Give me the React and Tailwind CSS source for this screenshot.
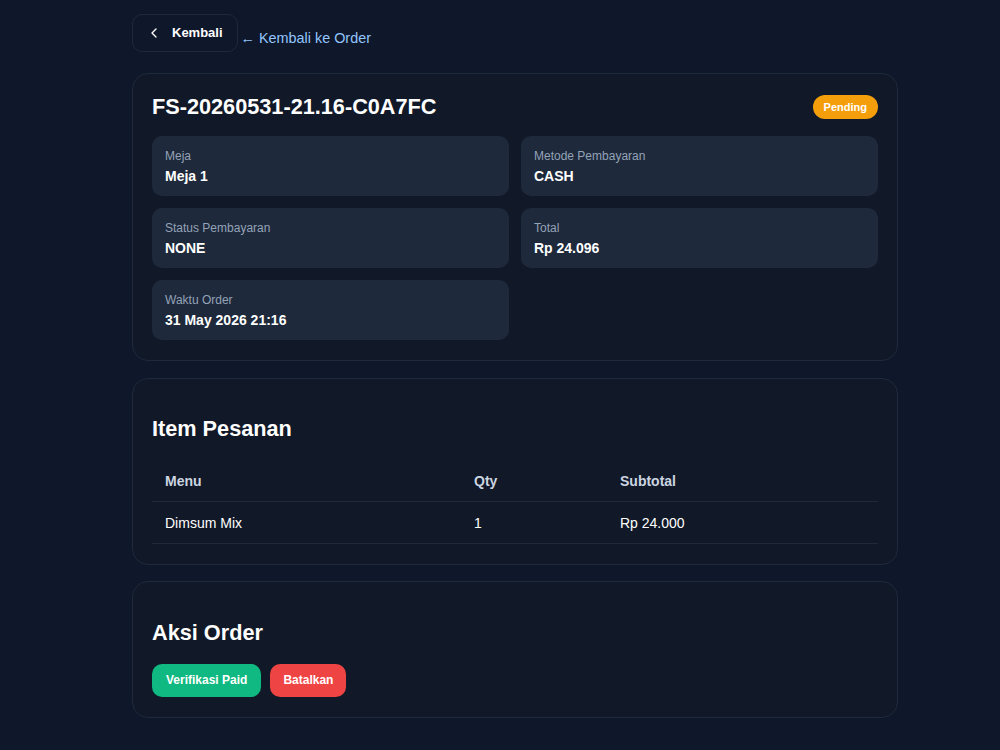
import React from 'react';
import { ChevronLeft } from 'lucide-react';

const info = [
    { label: 'Meja', value: 'Meja 1' },
    { label: 'Metode Pembayaran', value: 'CASH' },
    { label: 'Status Pembayaran', value: 'NONE' },
    { label: 'Total', value: 'Rp 24.096' },
    { label: 'Waktu Order', value: '31 May 2026 21:16' }
];

const items = [{ menu: 'Dimsum Mix', qty: 1, subtotal: 'Rp 24.000' }];

const App = () => {
    return (
        <div className="min-h-screen bg-[#0f172a] text-white font-['Liberation_Sans',Arial,sans-serif]">
            <div className="ml-[132px] w-[766px] pt-[14px] pb-8 flex flex-col">
                {/* Back nav */}
                <div className="flex items-center gap-[3px]">
                    <button className="h-[38px] pl-[13px] pr-[14px] flex items-center gap-[10px] rounded-[10px] border border-[#1e293b] bg-[#0f172a] text-[13px] font-bold">
                        <ChevronLeft className="w-4 h-4" strokeWidth={2} />
                        Kembali
                    </button>
                    <a className="text-[14.4px] text-[#93c5fd] mt-[12px]">← Kembali ke Order</a>
                </div>

                {/* Order info */}
                <div className="mt-[21px] rounded-2xl border border-[#1e293b] bg-[#111827] px-[19px] pt-[19px] pb-[20px]">
                    <div className="flex items-center justify-between h-[28px]">
                        <h1 className="text-[21.7px] font-bold leading-6">FS-20260531-21.16-C0A7FC</h1>
                        <span className="bg-[#f59e0b] text-white text-[11px] font-bold px-[11px] h-[24px] flex items-center rounded-full">
                            Pending
                        </span>
                    </div>
                    <div className="grid grid-cols-2 gap-x-[12px] gap-y-[12px] mt-[15px]">
                        {info.map(i => (
                            <div key={i.label} className="bg-[#1e293b] rounded-[10px] h-[60px] px-[13px] pt-[12px]">
                                <p className="text-xs text-[#94a3b8] leading-4">{i.label}</p>
                                <p className="text-sm font-bold leading-5 mt-[2px]">{i.value}</p>
                            </div>
                        ))}
                    </div>
                </div>

                {/* Items */}
                <div className="mt-[17px] rounded-2xl border border-[#1e293b] bg-[#111827] px-[19px] pt-[36px] pb-5">
                    <h2 className="text-[21.7px] font-bold leading-7">Item Pesanan</h2>
                    <table className="w-full mt-[18px] text-sm text-left">
                        <thead>
                            <tr className="border-b border-[#1e293b]">
                                <th className="w-[309px] px-[13px] h-[40px] font-bold text-[#cbd5e1]">Menu</th>
                                <th className="w-[146px] px-[13px] font-bold text-[#cbd5e1]">Qty</th>
                                <th className="px-[13px] font-bold text-[#cbd5e1]">Subtotal</th>
                            </tr>
                        </thead>
                        <tbody>
                            {items.map(it => (
                                <tr key={it.menu} className="border-b border-[#1e293b]">
                                    <td className="px-[13px] h-[42px] pt-[2px]">{it.menu}</td>
                                    <td className="px-[13px] pt-[2px]">{it.qty}</td>
                                    <td className="px-[13px] pt-[2px]">{it.subtotal}</td>
                                </tr>
                            ))}
                        </tbody>
                    </table>
                </div>

                {/* Actions */}
                <div className="mt-[16px] rounded-2xl border border-[#1e293b] bg-[#111827] px-[19px] pt-[37px] pb-[20px]">
                    <h2 className="text-[21.7px] font-bold leading-7">Aksi Order</h2>
                    <div className="flex gap-[9px] mt-[17px]">
                        <button className="h-[33px] px-[14px] rounded-[10px] bg-[#10b981] text-xs font-bold">
                            Verifikasi Paid
                        </button>
                        <button className="h-[33px] px-[13px] rounded-[10px] bg-[#ef4444] text-xs font-bold">
                            Batalkan
                        </button>
                    </div>
                </div>
            </div>
        </div>
    );
};

export default App;
